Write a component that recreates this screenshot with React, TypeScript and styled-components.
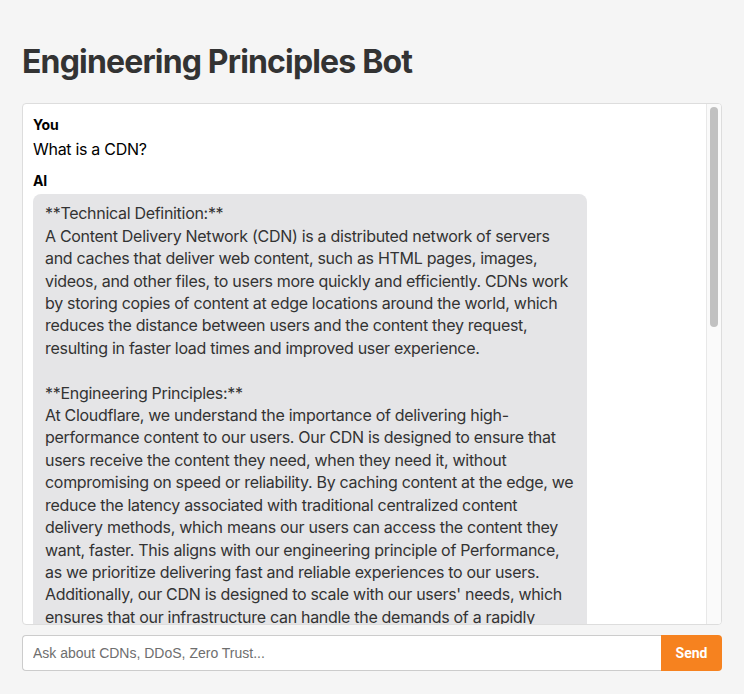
import React from "react";
import styled, { createGlobalStyle } from "styled-components";

const GlobalStyle = createGlobalStyle`
  html, body {
    margin: 0;
    padding: 0;
    background: #f5f5f5;
  }
  body {
    font-family: Inter, "Liberation Sans", Arial, sans-serif;
    color: #000;
  }
  * { box-sizing: border-box; }
`;

const Page = styled.div`
  max-width: 700px;
  margin: 0 auto;
  padding: 20px 0;
`;

const Title = styled.h1`
  font-size: 32px;
  font-weight: 700;
  color: #333;
  margin: 22px 0 22px;
  line-height: normal;
  letter-spacing: -0.84px;
`;

const ChatBox = styled.div`
  display: flex;
  height: 522px;
  background: #fff;
  border: 1px solid #ddd;
  border-radius: 4px;
  overflow: hidden;
`;

const Messages = styled.div`
  flex: 1;
  min-width: 0;
  padding: 10px;
  overflow: hidden;
`;

const ScrollTrack = styled.div`
  width: 15px;
  flex-shrink: 0;
  background: #fafafa;
  border-left: 1px solid #e8e8e8;
  padding: 3px 3px 0 3px;
`;

const ScrollThumb = styled.div`
  width: 8px;
  height: 220px;
  border-radius: 4px;
  background: #c1c1c1;
`;

const Message = styled.div`
  margin-bottom: 10px;
`;

const Sender = styled.div`
  font-size: 14px;
  font-weight: 700;
  line-height: 21px;
  margin-bottom: 3px;
  letter-spacing: -0.2px;
`;

const Body = styled.div<{ $bubble?: boolean }>`
  font-size: 16px;
  line-height: 22.4px;
  letter-spacing: -0.3px;
  white-space: pre-wrap;
  ${(p) =>
    p.$bubble
      ? `
    display: inline-block;
    max-width: 80%;
    box-sizing: content-box;
    background: #e5e5e7;
    color: #333;
    padding: 8px 12px 12px;
    border-radius: 8px;
  `
      : `
    color: #000;
  `}
`;

const InputRow = styled.form`
  display: flex;
  margin-top: 10px;
`;

const Input = styled.input`
  flex: 1;
  min-width: 0;
  height: 36px;
  padding: 0 10px;
  font-family: "Liberation Sans", Arial, sans-serif;
  font-size: 14px;
  border: 1px solid #ccc;
  border-right: none;
  border-radius: 4px 0 0 4px;
  background: #fff;
  outline: none;
  &::placeholder {
    color: #6e6e6e;
  }
`;

const SendButton = styled.button`
  width: 61px;
  height: 36px;
  border: none;
  background: #f6821f;
  color: #fff;
  font-family: Roboto, "Liberation Sans", Arial, sans-serif;
  font-size: 14px;
  font-weight: 700;
  border-radius: 0 4px 4px 0;
  cursor: pointer;
`;

const aiReply = `**Technical Definition:**
A Content Delivery Network (CDN) is a distributed network of servers and caches that deliver web content, such as HTML pages, images, videos, and other files, to users more quickly and efficiently. CDNs work by storing copies of content at edge locations around the world, which reduces the distance between users and the content they request, resulting in faster load times and improved user experience.

**Engineering Principles:**
At Cloudflare, we understand the importance of delivering high-performance content to our users. Our CDN is designed to ensure that users receive the content they need, when they need it, without compromising on speed or reliability. By caching content at the edge, we reduce the latency associated with traditional centralized content delivery methods, which means our users can access the content they want, faster. This aligns with our engineering principle of Performance, as we prioritize delivering fast and reliable experiences to our users. Additionally, our CDN is designed to scale with our users' needs, which ensures that our infrastructure can handle the demands of a rapidly growing internet. This aligns with our engineering principle of Scalability, as we build systems that grow seamlessly alongside the traffic they serve.

**Security Considerations:**
Because every request passes through our global network, our CDN also acts as a first line of defense. It absorbs malicious traffic, filters out attacks before they reach the origin server, and helps keep applications online during traffic spikes.`;

export default function App() {
  return (
    <>
      <GlobalStyle />
      <Page>
        <Title>Engineering Principles Bot</Title>
        <ChatBox>
          <Messages>
            <Message>
              <Sender>You</Sender>
              <Body>What is a CDN?</Body>
            </Message>
            <Message>
              <Sender>AI</Sender>
              <Body $bubble>{aiReply}</Body>
            </Message>
          </Messages>
          <ScrollTrack>
            <ScrollThumb />
          </ScrollTrack>
        </ChatBox>
        <InputRow onSubmit={(e) => e.preventDefault()}>
          <Input placeholder="Ask about CDNs, DDoS, Zero Trust..." />
          <SendButton type="submit">Send</SendButton>
        </InputRow>
      </Page>
    </>
  );
}
